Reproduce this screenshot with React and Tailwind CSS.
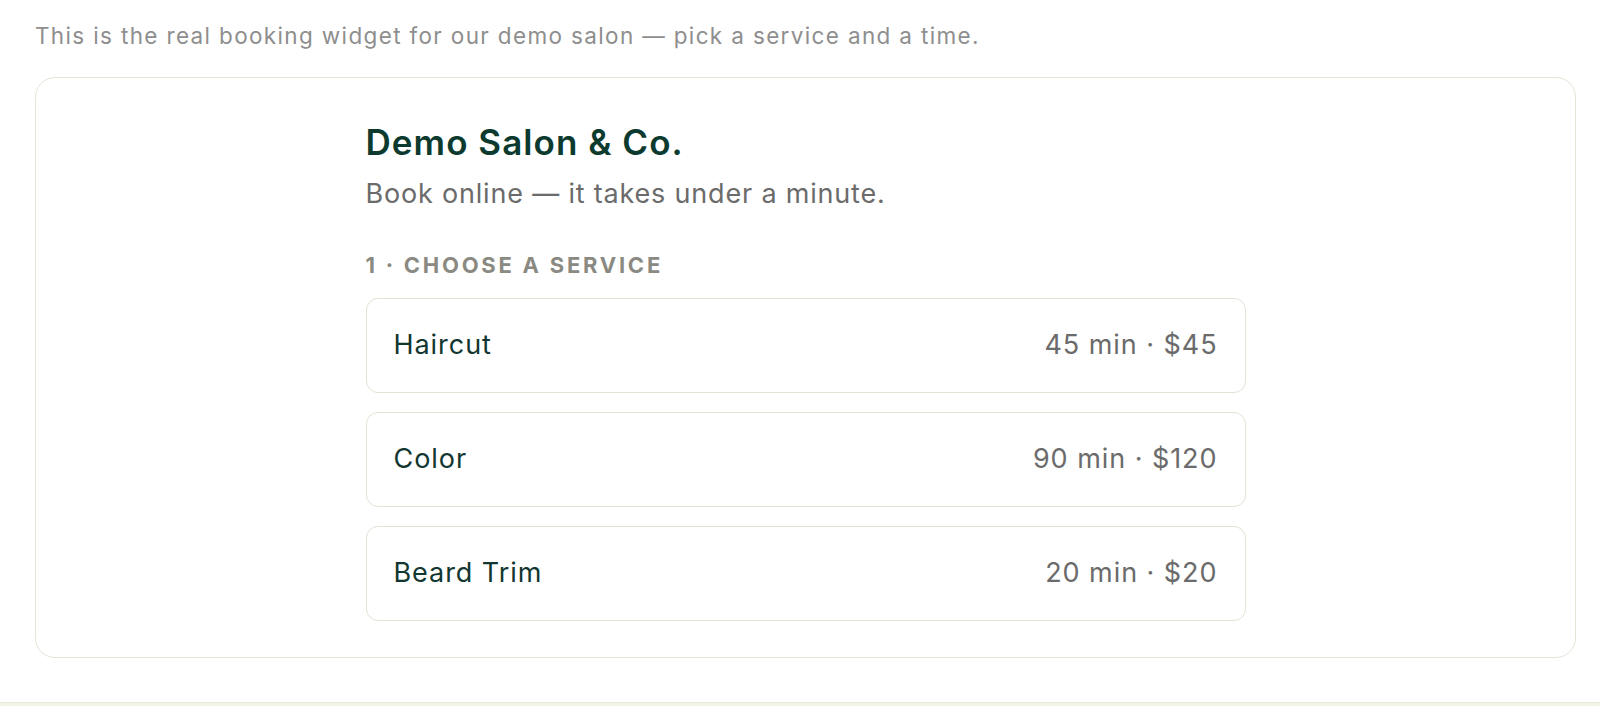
const services = [
  { name: 'Haircut', meta: '45 min · $45' },
  { name: 'Color', meta: '90 min · $120' },
  { name: 'Beard Trim', meta: '20 min · $20' },
]

export default function App() {
  return (
    <div
      className="min-h-screen bg-white flex flex-col [font-optical-sizing:none]"
      style={{ fontFamily: 'Inter, "Noto Sans", sans-serif' }}
    >
      <div className="pl-[35px] pr-[24px] pt-[21px] pb-[44px]">
        <p className="text-[22.5px] leading-[30px] tracking-[0.06em] text-[#8e8e8e] mb-[26px]">
          This is the real booking widget for our demo salon — pick a service and a time.
        </p>

        <div className="border border-[#e6e4d6] rounded-[20px] bg-white pt-[43px] pb-[36px]">
          <div className="w-[880px] mx-auto">
            <h1 className="text-[35px] leading-[42px] font-[560] tracking-[0.03em] text-[#0c3a2f]">
              Demo Salon &amp; Co.
            </h1>
            <p className="mt-[15px] text-[27px] leading-[32px] tracking-[0.03em] text-[#6b6b6b]">
              Book online — it takes under a minute.
            </p>

            <h2 className="mt-[42px] text-[22px] leading-[26px] font-bold tracking-[0.125em] uppercase text-[#8a8a82]">
              1 · Choose a service
            </h2>

            <div className="mt-[20px] flex flex-col gap-[19px]">
              {services.map((s) => (
                <button
                  key={s.name}
                  className="h-[95px] w-full flex items-center justify-between px-[27px] border border-[#e4e2d4] rounded-[12px] bg-white text-left text-[27px] tracking-[0.035em]"
                >
                  <span className="text-[#123630]">{s.name}</span>
                  <span className="text-[#6b6b6b]">{s.meta}</span>
                </button>
              ))}
            </div>
          </div>
        </div>
      </div>
      <div className="flex-1 bg-[#f4f3e7] border-t border-[#ebe9dc]"></div>
    </div>
  )
}
